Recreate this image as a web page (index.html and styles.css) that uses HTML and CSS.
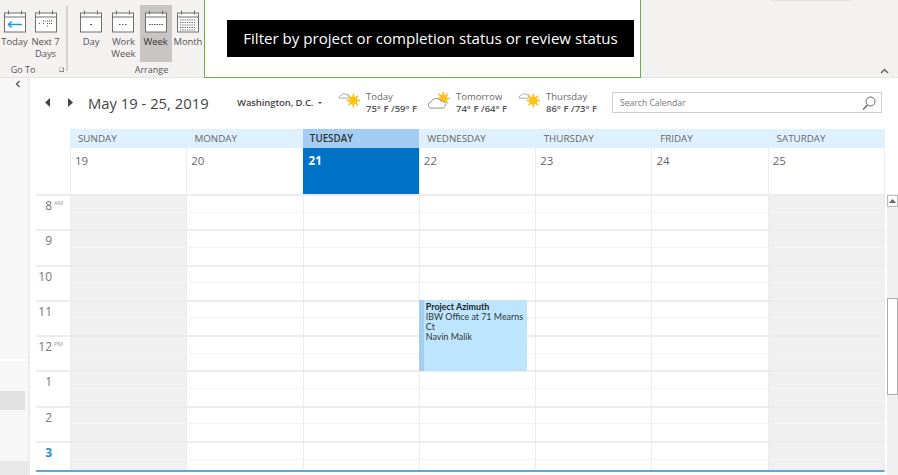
FILE: index.html
```html
<!DOCTYPE html>
<html lang="en">
<head>
<meta charset="UTF-8" />
<title>Calendar</title>
<link rel="stylesheet" href="styles.css">
</head>
<body>
  <svg class="defs" width="0" height="0">
    <symbol id="cal" viewBox="0 0 24 24">
      <rect x="1.5" y="3.5" width="21" height="19" fill="#fff" stroke="#6f6f6f" />
      <path d="M1.5 7.5h21" stroke="#6f6f6f" fill="none" />
      <path d="M5.5 1v4M18.5 1v4" stroke="#6f6f6f" fill="none" />
    </symbol>
    <symbol id="sun" viewBox="0 0 24 20">
      <path d="M1.500 7.500a2 2 0 0 1 2-3a3 3 0 0 1 5-.5h3v3.500z" fill="#fff" stroke="#a6a6a6" />
      <g stroke="#f5b81c" stroke-width="1.500">
        <path d="M16 3v14M9 10h14M11 5l10 10M21 5L11 15" />
      </g>
      <circle cx="16" cy="10" r="4.500" fill="#fcc419" />
    </symbol>
  </svg>

  <div class="ribbon">
    <div class="group goto">
      <div class="tools">
        <div class="tool">
          <svg class="tool-icon" viewBox="0 0 24 24"><use href="#cal" /><path d="M5 15h14M5 15l4-3M5 15l4 3" stroke="#1f9be0" stroke-width="1.300" fill="none" /></svg>
          <span>Today</span>
        </div>
        <div class="tool">
          <svg class="tool-icon" viewBox="0 0 24 24"><use href="#cal" /><path d="M5 14h2M9 14h2M9 11.500h10M13 14h6M13 16.500h2" stroke="#555" stroke-dasharray="1 1" fill="none" /></svg>
          <span>Next 7<br>Days</span>
        </div>
      </div>
      <div class="group-label">Go To<i class="launcher"></i></div>
    </div>
    <div class="group arrange">
      <div class="tools">
        <div class="tool">
          <svg class="tool-icon" viewBox="0 0 24 24"><use href="#cal" /><path d="M11 15h2" stroke="#555" fill="none" /></svg>
          <span>Day</span>
        </div>
        <div class="tool">
          <svg class="tool-icon" viewBox="0 0 24 24"><use href="#cal" /><path d="M8 15h8" stroke="#555" stroke-dasharray="1.500 1.500" fill="none" /></svg>
          <span>Work<br>Week</span>
        </div>
        <div class="tool selected">
          <svg class="tool-icon" viewBox="0 0 24 24"><use href="#cal" /><path d="M5 15h14" stroke="#555" stroke-dasharray="1.500 1" fill="none" /></svg>
          <span>Week</span>
        </div>
        <div class="tool">
          <svg class="tool-icon" viewBox="0 0 24 24"><use href="#cal" /><path d="M4 10.500h16M4 13h16M4 15.500h16M4 18h16M4 20.500h16" stroke="#666" stroke-dasharray="1.300 1" fill="none" /></svg>
          <span>Month</span>
        </div>
      </div>
      <div class="group-label">Arrange</div>
    </div>
    <div class="tip-panel">
      <div class="tip">Filter by project or completion status or review status</div>
    </div>
    <div class="ribbon-rest">
      <i class="rest-tab"></i>
      <svg class="collapse" width="9" height="6" viewBox="0 0 9 6"><path d="M1 5l3.500-3.500L8 5" stroke="#666" stroke-width="1.500" fill="none" /></svg>
    </div>
  </div>

  <div class="main">
    <div class="rail">
      <svg class="rail-toggle" width="6" height="8" viewBox="0 0 6 8"><path d="M4.500 1L1.500 4l3 3" stroke="#555" stroke-width="1.300" fill="none" /></svg>
      <div class="rail-line"></div>
      <div class="rail-selected"></div>
      <div class="rail-foot"></div>
    </div>

    <div class="calendar">
      <div class="cal-head">
        <div class="nav">
          <svg width="6" height="9" viewBox="0 0 6 9"><path d="M5 0v9L0 4.500z" fill="#444" /></svg>
          <svg width="6" height="9" viewBox="0 0 6 9"><path d="M1 0v9l5-4.500z" fill="#444" /></svg>
        </div>
        <div class="range">May 19 - 25, 2019</div>
        <div class="city">Washington, D.C.<i class="caret"></i></div>
        <div class="weather">
          <svg class="wx-icon" viewBox="0 0 24 20"><use href="#sun" /></svg>
          <div class="wx-text">Today<br><b>75° F /59° F</b></div>
        </div>
        <div class="weather">
          <svg class="wx-icon" viewBox="0 0 24 20">
            <g stroke="#f5b81c" stroke-width="1.500"><path d="M16 1v14M9 8h14M11 3l10 10M21 3L11 13" /></g>
            <circle cx="16" cy="8" r="4.500" fill="#fcc419" />
            <path d="M2 18a3.500 3.500 0 0 1 1-6.500a6 6 0 0 1 10.500-1a4 4 0 0 1 2.500 7.500z" fill="#fff" stroke="#8c8c8c" />
          </svg>
          <div class="wx-text">Tomorrow<br><b>74° F /64° F</b></div>
        </div>
        <div class="weather">
          <svg class="wx-icon" viewBox="0 0 24 20"><use href="#sun" /></svg>
          <div class="wx-text">Thursday<br><b>86° F /73° F</b></div>
        </div>
        <div class="search">
          <span>Search Calendar</span>
          <svg width="14" height="14" viewBox="0 0 14 14"><circle cx="8.500" cy="5.500" r="4.500" fill="none" stroke="#666" /><path d="M5.500 9L1 13.500" stroke="#666" stroke-width="1.300" /></svg>
        </div>
      </div>

      <div class="week-top">
        <div class="day-names">
          <div>SUNDAY</div>
          <div>MONDAY</div>
          <div class="today-name">TUESDAY</div>
          <div>WEDNESDAY</div>
          <div>THURSDAY</div>
          <div>FRIDAY</div>
          <div>SATURDAY</div>
        </div>
        <div class="dates">
          <div>19</div>
          <div>20</div>
          <div class="today-date">21</div>
          <div>22</div>
          <div>23</div>
          <div>24</div>
          <div>25</div>
        </div>
      </div>

      <div class="week-body">
        <div class="hours">
          <div class="hour"><span class="num">8</span><small>AM</small></div>
          <div class="hour"><span class="num">9</span></div>
          <div class="hour"><span class="num">10</span></div>
          <div class="hour"><span class="num">11</span></div>
          <div class="hour"><span class="num">12</span><small>PM</small></div>
          <div class="hour"><span class="num">1</span></div>
          <div class="hour"><span class="num">2</span></div>
          <div class="hour now"><span class="num">3</span></div>
        </div>
        <div class="columns">
          <div class="col off"></div>
          <div class="col"></div>
          <div class="col"></div>
          <div class="col">
            <div class="event">
              <b>Project Azimuth</b><br>IBW Office at 71 Mearns Ct<br>Navin Malik
            </div>
          </div>
          <div class="col"></div>
          <div class="col"></div>
          <div class="col off"></div>
        </div>
        <div class="scrollbar">
          <div class="scroll-up"><svg width="7" height="4" viewBox="0 0 7 4"><path d="M3.500 0L7 4H0z" fill="#666" /></svg></div>
          <div class="scroll-thumb"></div>
        </div>
      </div>
    </div>
  </div>
</body>
</html>
```

FILE: styles.css
```css
* {
  box-sizing: border-box;
}
html, body {
  margin: 0;
  height: 100%;
}
body {
  width: 898px;
  height: 475px;
  overflow: hidden;
  background: #fff;
  font-family: "Open Sans", "Noto Sans", sans-serif;
  color: #444;
}
.defs {
  position: absolute;
}

/* ribbon */
.ribbon {
  display: flex;
  height: 78px;
  background: #f3f2f1;
  border-bottom: 1px solid #e4e4e4;
}
.group {
  display: flex;
  flex-direction: column;
  justify-content: space-between;
  padding-top: 5px;
}
.goto {
  width: 68px;
  position: relative;
}
.goto::after {
  content: "";
  position: absolute;
  right: 0;
  top: 6px;
  bottom: 6px;
  width: 2px;
  background: #d4d3d2;
}
.arrange {
  width: 136px;
  padding-left: 7px;
}
.tools {
  display: flex;
}
.tool {
  width: 32.500px;
  height: 57px;
  display: flex;
  flex-direction: column;
  align-items: center;
  padding-top: 4px;
  font-size: 9.500px;
  line-height: 12px;
  text-align: center;
  color: #555;
  letter-spacing: -0.1px;
}
.goto .tool {
  width: 29px;
}
.goto .tool + .tool {
  width: 31px;
  margin-left: 1px;
}
.tool span {
  margin-top: 2px;
  white-space: nowrap;
}
.tool.selected {
  background: #c8c6c4;
  color: #333;
}
.tool-icon {
  width: 24px;
  height: 25px;
  flex: none;
}
.group-label {
  position: relative;
  height: 15px;
  font-size: 9px;
  line-height: 15px;
  text-align: center;
  color: #555;
}
.goto .group-label {
  padding-right: 22px;
}
.arrange .group-label {
  padding-left: 24px;
}
.launcher {
  position: absolute;
  left: 59px;
  top: 5px;
  width: 5px;
  height: 5px;
  border: 1px solid #888;
  border-top-color: #ccc;
  border-left-color: #ccc;
}
.tip-panel {
  width: 437px;
  height: 78px;
  padding: 20px 6px 0 22px;
  background: #fff;
  border-left: 1px solid #70ad47;
  border-right: 1px solid #70ad47;
  border-bottom: 1px solid #70ad47;
}
.tip {
  height: 37px;
  background: #000;
  color: #fff;
  font-size: 15.100px;
  line-height: 37px;
  text-align: center;
}
.ribbon-rest {
  flex: 1;
  display: flex;
  flex-direction: column;
  justify-content: space-between;
  align-items: flex-end;
  padding: 0 9px 3px 0;
}
.rest-tab {
  display: block;
  width: 82px;
  height: 1px;
  margin-right: 37px;
  background: #e6e5e4;
}
.rail {
  position: relative;
  width: 30px;
  flex: none;
  background: #f7f7f7;
  border-right: 2px solid #ececec;
}
.rail-toggle {
  position: absolute;
  top: 2px;
  left: 15px;
}
.rail-line {
  position: absolute;
  top: 281px;
  left: 0;
  right: 0;
  height: 2px;
  background: #fff;
}
.rail-selected {
  position: absolute;
  top: 313px;
  left: 0;
  width: 25px;
  height: 19px;
  background: #e2e2e2;
}
.rail-foot {
  position: absolute;
  top: 383px;
  left: 0;
  right: 0;
  bottom: 0;
  background: #e8e8e8;
}

/* main area */
.main {
  display: flex;
  height: 397px;
}
.calendar {
  flex: 1;
  min-width: 0;
}
.cal-head {
  display: flex;
  align-items: center;
  height: 51px;
  padding-bottom: 2px;
}
.nav {
  display: flex;
  gap: 16px;
  margin-left: 15px;
}
.range {
  width: 149px;
  margin-left: 15px;
  font-size: 14.800px;
  color: #444;
}
.city {
  display: flex;
  align-items: center;
  width: 101px;
  font-size: 9.500px;
  font-weight: 600;
  letter-spacing: -0.1px;
  color: #444;
}
.caret {
  width: 0;
  height: 0;
  margin-left: 5px;
  border-left: 2px solid transparent;
  border-right: 2px solid transparent;
  border-top: 2px solid #444;
}
.weather {
  display: flex;
  align-items: flex-start;
  width: 90px;
  gap: 5px;
  font-size: 9.500px;
  line-height: 12px;
  color: #666;
}
.wx-icon {
  width: 23px;
  height: 19px;
  flex: none;
}
.wx-text b {
  font-weight: 600;
  color: #555;
}
.search {
  display: flex;
  align-items: center;
  justify-content: space-between;
  width: 270px;
  height: 21px;
  margin-left: 4px;
  padding: 0 5px 0 7px;
  border: 1px solid #ccced2;
  font-size: 8.600px;
  color: #777;
}
.week-top {
  margin-left: 40px;
  width: 815px;
}
.day-names,
.dates {
  display: grid;
  grid-template-columns: repeat(7, 1fr);
}
.day-names {
  height: 19px;
  background: #dff1fe;
  font-size: 9.800px;
  line-height: 19px;
  font-weight: 400;
  color: #666;
}
.day-names > div {
  padding-left: 8px;
}
.day-names .today-name {
  padding-left: 7px;
  background: #a5cdf3;
  color: #333;
  font-weight: 600;
}
.dates {
  height: 46px;
  font-size: 11.500px;
  color: #666;
  border-right: 1px solid #ececec;
}
.dates > div {
  padding: 5px 0 0 4px;
  border-left: 1px solid #ececec;
}
.dates .today-date {
  padding-left: 6px;
  background: #0072c6;
  color: #fff;
  font-weight: 700;
  border-left: 0;
}
.week-body {
  display: flex;
  height: 281px;
  margin-left: 6px;
}
.hours {
  width: 34px;
  height: 278px;
  flex: none;
  border-bottom: 2px solid #5ba8dc;
}
.hour {
  display: flex;
  align-items: flex-start;
  height: 35.300px;
  padding-top: 2px;
  border-top: 2px solid #ececec;
  font-size: 12px;
  line-height: 16px;
  color: #777;
}
.num {
  width: 16px;
  text-align: right;
}
.hour small {
  margin: 1px 0 0 2px;
  font-size: 6px;
  line-height: 8px;
  color: #999;
}
.hour.now {
  color: #2b8ad0;
  font-weight: 700;
}
.columns {
  display: grid;
  grid-template-columns: repeat(7, 1fr);
  width: 815px;
  height: 278px;
  flex: none;
  border-bottom: 2px solid #5ba8dc;
  border-right: 1px solid #ececec;
}
.col {
  position: relative;
  border-left: 1px solid #ececec;
  background-image:
    repeating-linear-gradient(to bottom,
      #ececec 0, #ececec 2px,
      transparent 2px, transparent 17.600px,
      #f4f4f4 17.600px, #f4f4f4 18.600px,
      transparent 18.600px, transparent 35.300px);
}
.col.off {
  background-color: #f0f0f0;
}
.event {
  position: absolute;
  top: 106px;
  left: -1px;
  width: 108px;
  height: 71px;
  padding: 2px 0 0 2px;
  background: #bde6fe;
  border-left: 5px solid #a5cdf3;
  font-family: Lato, "Open Sans", sans-serif;
  font-size: 8.900px;
  line-height: 10px;
  color: #333;
}
.event b {
  font-weight: 700;
  color: #222;
}
.scrollbar {
  width: 11px;
  margin-left: 2px;
  background: #f0f0f0;
}
.scroll-up {
  display: flex;
  align-items: center;
  justify-content: center;
  height: 12px;
  margin-top: 1px;
  background: #fff;
  border: 1px solid #bbb;
}
.scroll-thumb {
  height: 97px;
  margin-top: 91px;
  background: #fff;
  border: 1px solid #aaa;
}
.collapse {
  display: block;
}
```
